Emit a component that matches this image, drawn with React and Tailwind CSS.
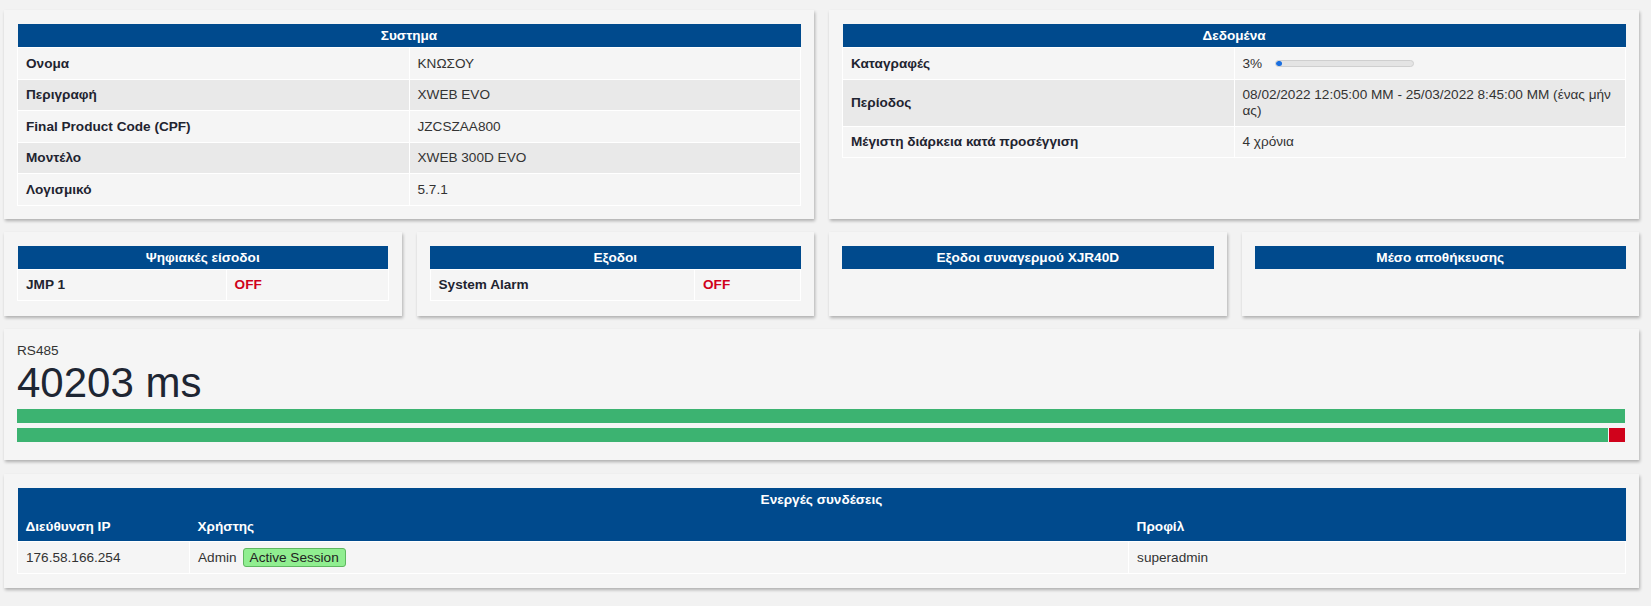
import React from "react";

const FONT = "font-['Liberation_Sans',Arial,sans-serif]";

function Card({ children, className = "" }) {
  return (
    <div
      className={`bg-[#f5f5f5] shadow-[1px_2px_3px_rgba(0,0,0,0.28)] px-[13px] pt-[14px] pb-[13px] ${className}`}
    >
      {children}
    </div>
  );
}

const TH =
  "bg-[#004a8d] text-white font-bold text-[13.6px] leading-[15px] py-[4px] text-center border-0";
const TDL =
  "border border-white px-[8px] py-[7.5px] leading-[15.5px] font-bold text-[#1f2430] text-left align-middle";
const TDV =
  "border border-white px-[8px] py-[7.5px] leading-[15.5px] text-[#333] text-left align-middle";
const TDR =
  "border border-white px-[8px] py-[7.5px] leading-[15.5px] text-[#d0021b] font-bold text-left align-middle";

function KVTable({ title, rows, firstWidth = "50%" }) {
  return (
    <table className="w-full border-collapse table-fixed text-[13.6px]">
      <colgroup>
        <col style={{ width: firstWidth }} />
        <col />
      </colgroup>
      <thead>
        <tr>
          <th colSpan={2} className={TH}>
            {title}
          </th>
        </tr>
      </thead>
      <tbody>
        {rows.map((r, i) => (
          <tr key={i} className={i % 2 === 1 ? "bg-[#e9e9e9]" : "bg-[#f5f5f5]"}>
            <td className={TDL}>{r[0]}</td>
            <td className={r[2] ? TDR : TDV}>{r[1]}</td>
          </tr>
        ))}
      </tbody>
    </table>
  );
}

function HeaderOnly({ title }) {
  return (
    <table className="w-full border-collapse table-fixed text-[13.6px]">
      <thead>
        <tr>
          <th className={TH}>{title}</th>
        </tr>
      </thead>
    </table>
  );
}

const CH =
  "bg-[#004a8d] text-white font-bold text-left px-[8px] py-[7.5px] leading-[15px] border-0";

export default function App() {
  return (
    <div className={`${FONT} bg-[#f2f2f2] min-h-[606px] pl-[4px] pr-[12px] pt-[10px] text-[13.6px]`}>
      <div className="grid grid-cols-2 gap-[15px]">
        <Card>
          <KVTable
            title="Συστημα"
            rows={[
              ["Ονομα", "ΚΝΩΣΟΥ"],
              ["Περιγραφή", "XWEB EVO"],
              ["Final Product Code (CPF)", "JZCSZAA800"],
              ["Μοντέλο", "XWEB 300D EVO"],
              ["Λογισμικό", "5.7.1"],
            ]}
          />
        </Card>
        <Card>
          <KVTable
            title="Δεδομένα"
            rows={[
              [
                "Καταγραφές",
                <div className="flex items-center">
                  <span>3%</span>
                  <div className="ml-[13px] w-[139px] h-[7px] rounded-full bg-[#e4e4e4] border border-[#cfcfcf] overflow-hidden">
                    <div className="h-full bg-[#1a6fe0] rounded-full" style={{ width: "4%" }} />
                  </div>
                </div>,
              ],
              [
                "Περίοδος",
                <span className="whitespace-nowrap">
                  08/02/2022 12:05:00 MM - 25/03/2022 8:45:00 MM (ένας μήν
                  <br />
                  ας)
                </span>,
              ],
              ["Μέγιστη διάρκεια κατά προσέγγιση", "4 χρόνια"],
            ]}
          />
        </Card>
      </div>

      <div className="grid grid-cols-4 gap-[15px] mt-[13px]">
        <Card className="pb-[15px]">
          <KVTable title="Ψηφιακές είσοδοι" firstWidth="56.3%" rows={[["JMP 1", "OFF", true]]} />
        </Card>
        <Card className="pb-[15px]">
          <KVTable title="Εξοδοι" firstWidth="71.4%" rows={[["System Alarm", "OFF", true]]} />
        </Card>
        <Card className="pb-[15px]">
          <HeaderOnly title="Εξοδοι συναγερμού XJR40D" />
        </Card>
        <Card className="pb-[15px]">
          <HeaderOnly title="Μέσο αποθήκευσης" />
        </Card>
      </div>

      <Card className="mt-[13px] pt-[13px] pb-[18px] pr-[14px]">
        <div className="text-[13.6px] leading-[16px] text-[#333]">RS485</div>
        <div className="mt-[1px] text-[42px] leading-[46px] text-[#1e2633]">40203 ms</div>
        <div className="mt-[3px] h-[14px] bg-[#3cb371]" />
        <div className="mt-[5px] h-[14px] flex gap-[1px]">
          <div className="flex-1 bg-[#3cb371]" />
          <div className="w-[16px] bg-[#d0021b]" />
        </div>
      </Card>

      <Card className="mt-[14px] pb-[14px]">
        <table className="w-full border-collapse table-fixed text-[13.6px]">
          <colgroup>
            <col style={{ width: "10.7%" }} />
            <col style={{ width: "58.4%" }} />
            <col />
          </colgroup>
          <thead>
            <tr>
              <th colSpan={3} className={TH}>
                Ενεργές συνδέσεις
              </th>
            </tr>
            <tr>
              <th className={CH}>Διεύθυνση IP</th>
              <th className={CH}>Χρήστης</th>
              <th className={CH}>Προφίλ</th>
            </tr>
          </thead>
          <tbody>
            <tr className="bg-[#f5f5f5]">
              <td className={TDV}>176.58.166.254</td>
              <td className="border border-white px-[8px] py-[6px] leading-[17px] text-[#333] text-left align-middle">
                <span>Admin</span>
                <span className="ml-[6px] inline-block bg-[#90ee90] border border-[#5fb760] rounded-[3px] px-[6px] leading-[17px] text-[#222]">
                  Active Session
                </span>
              </td>
              <td className={TDV}>superadmin</td>
            </tr>
          </tbody>
        </table>
      </Card>
    </div>
  );
}
